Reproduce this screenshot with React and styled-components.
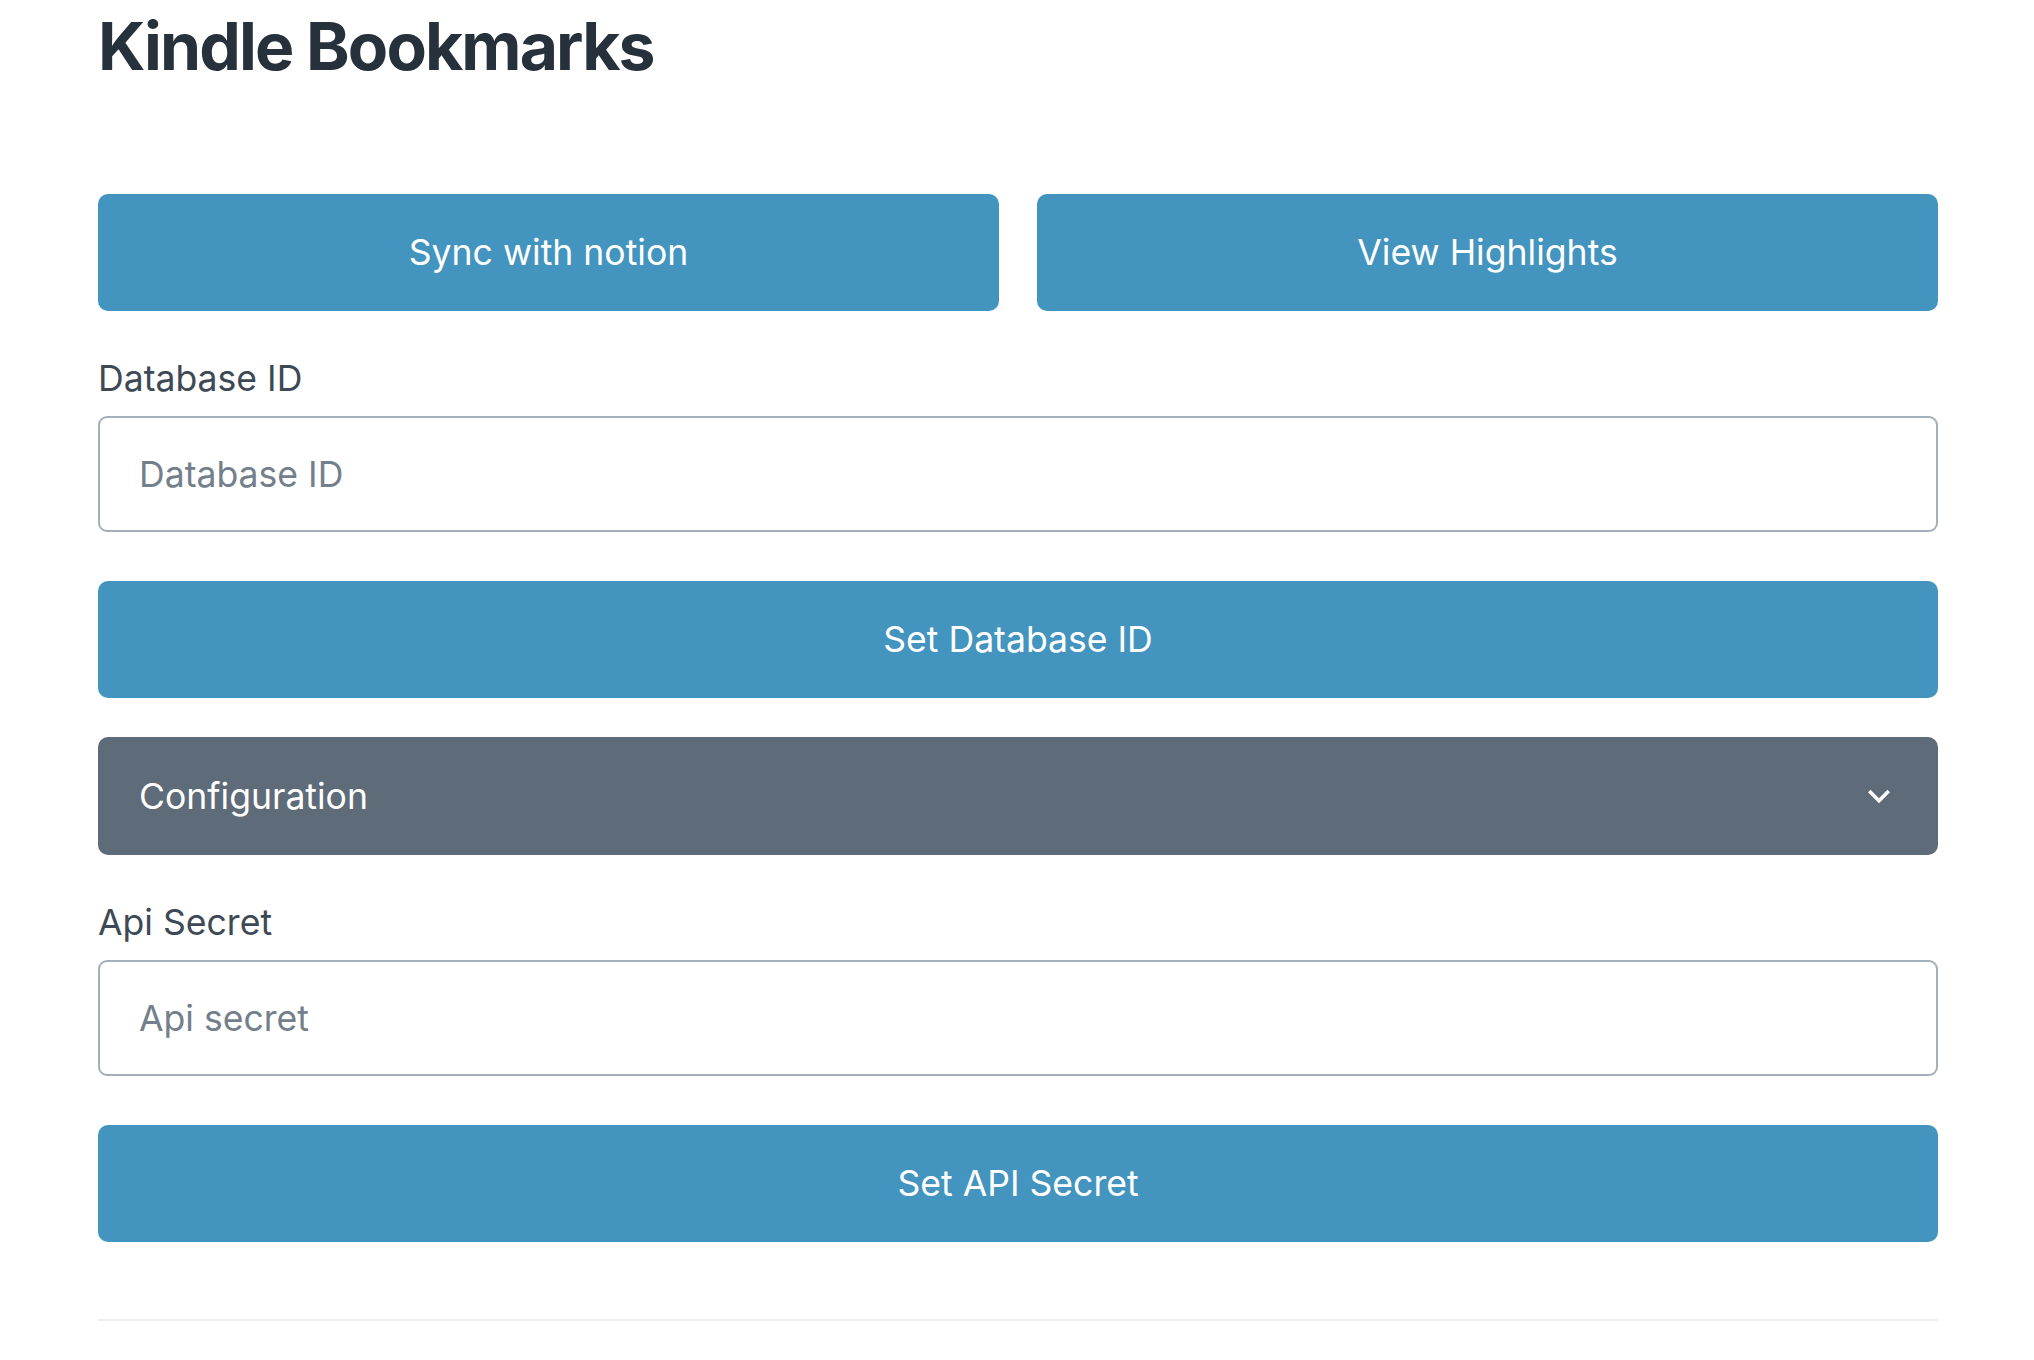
import React, { useState } from "react";
import styled, { createGlobalStyle } from "styled-components";

const GlobalStyle = createGlobalStyle`
  html, body {
    margin: 0;
    padding: 0;
    background: #ffffff;
  }
  body {
    font-family: Inter, "Noto Sans", "Liberation Sans", sans-serif;
    color: #3d4a56;
  }
  * {
    box-sizing: border-box;
  }
`;

const Page = styled.main`
  padding: 7px 96px 24px 98px;
`;

const Title = styled.h1`
  margin: 0 0 108px;
  font-size: 66px;
  line-height: 1.2;
  font-weight: 700;
  letter-spacing: -1.9px;
  color: #26313c;
`;

const ButtonRow = styled.div`
  display: grid;
  grid-template-columns: repeat(2, 1fr);
  column-gap: 38px;
`;

const PrimaryButton = styled.button`
  display: flex;
  align-items: center;
  justify-content: center;
  width: 100%;
  height: 117px;
  margin-top: ${(p) => p.$top || 0}px;
  border: none;
  border-radius: 10px;
  background: #4394bf;
  color: #ffffff;
  font-family: inherit;
  font-size: 35.6px;
  font-weight: 400;
  cursor: pointer;
`;

const Field = styled.div`
  margin-top: 41px;
`;

const Label = styled.label`
  display: block;
  margin-bottom: 10px;
  font-size: 35.6px;
  line-height: 54px;
  color: #3d4a56;
`;

const Input = styled.input`
  display: block;
  width: 100%;
  height: 116px;
  padding: 0 39px;
  border: 2px solid #a3afbb;
  border-radius: 9px;
  background: #ffffff;
  font-family: inherit;
  font-size: 35.6px;
  color: #26313c;
  outline: none;
  &::placeholder {
    color: #737f8a;
  }
`;

const AccordionHeader = styled.button`
  display: flex;
  align-items: center;
  justify-content: space-between;
  width: 100%;
  height: 118px;
  margin-top: 39px;
  padding: 0 37px 0 41px;
  border: none;
  border-radius: 10px;
  background: #5e6b78;
  color: #ffffff;
  font-family: inherit;
  font-size: 35.6px;
  cursor: pointer;
`;

const Divider = styled.hr`
  margin: 77px 0 0;
  border: none;
  height: 2px;
  background: #edeef3;
`;

function ChevronDown() {
  return (
    <svg width="44" height="44" viewBox="0 0 24 24" aria-hidden="true">
      <path fill="#ffffff" d="M16.59 8.59L12 13.17 7.41 8.59 6 10l6 6 6-6z" />
    </svg>
  );
}

export default function App() {
  const [databaseId, setDatabaseId] = useState("");
  const [apiSecret, setApiSecret] = useState("");
  const [open, setOpen] = useState(true);

  return (
    <>
      <GlobalStyle />
      <Page>
        <Title>Kindle Bookmarks</Title>
        <ButtonRow>
          <PrimaryButton>Sync with notion</PrimaryButton>
          <PrimaryButton>View Highlights</PrimaryButton>
        </ButtonRow>

        <Field>
          <Label htmlFor="database-id">Database ID</Label>
          <Input
            id="database-id"
            placeholder="Database ID"
            value={databaseId}
            onChange={(e) => setDatabaseId(e.target.value)}
          />
        </Field>
        <PrimaryButton $top={49}>Set Database ID</PrimaryButton>

        <AccordionHeader onClick={() => setOpen(!open)}>
          <span>Configuration</span>
          <ChevronDown />
        </AccordionHeader>

        {open && (
          <>
            <Field>
              <Label htmlFor="api-secret">Api Secret</Label>
              <Input
                id="api-secret"
                placeholder="Api secret"
                value={apiSecret}
                onChange={(e) => setApiSecret(e.target.value)}
              />
            </Field>
            <PrimaryButton $top={49}>Set API Secret</PrimaryButton>
          </>
        )}

        <Divider />
      </Page>
    </>
  );
}
